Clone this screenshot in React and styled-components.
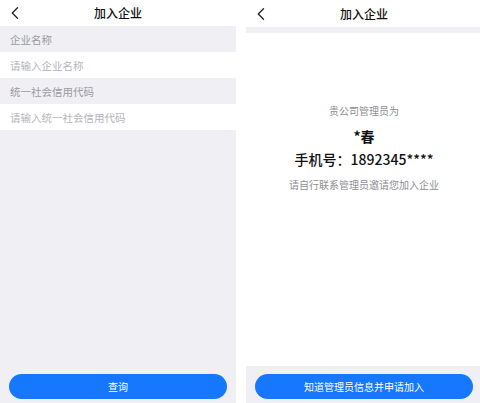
import styled, { createGlobalStyle } from "styled-components";

const GlobalStyle = createGlobalStyle`
  html, body {
    margin: 0;
    padding: 0;
    background: #ffffff;
  }
  body {
    font-family: "Noto Sans CJK SC", "Noto Sans", "Liberation Sans", sans-serif;
  }
`;

const Stage = styled.div`
  width: 480px;
  height: 403px;
  display: flex;
  gap: 10px;
  overflow: hidden;
  background: #ffffff;
`;

const Screen = styled.div`
  flex: 0 0 236px;
  height: 403px;
  display: flex;
  flex-direction: column;
  background: ${(p) => (p.$gray ? "#f0eff4" : "#ffffff")};
`;

const NavBar = styled.div`
  height: ${(p) => p.$h || 26}px;
  flex: 0 0 auto;
  display: grid;
  grid-template-columns: 40px 1fr 40px;
  align-items: center;
  background: #ffffff;
`;

const BackBtn = styled.div`
  display: flex;
  align-items: center;
  padding-left: 11px;
  height: 100%;
`;

const Title = styled.div`
  text-align: center;
  font-size: 12px;
  font-weight: 500;
  color: #111111;
  line-height: 14px;
`;

const SectionLabel = styled.div`
  height: 26px;
  display: flex;
  align-items: center;
  padding-left: 10px;
  font-size: 10.5px;
  color: #9a9aa0;
  background: #f0eff4;
`;

const InputRow = styled.div`
  height: 26px;
  display: flex;
  align-items: center;
  padding-left: 10px;
  font-size: 10.5px;
  color: #b4b4ba;
  background: #ffffff;
`;

const Spacer = styled.div`
  flex: 1;
`;

const Footer = styled.div`
  padding: ${(p) => (p.$band ? "6px 9px 4px" : "0 9px 4px")};
  background: #f0eff4;
`;

const PrimaryButton = styled.button`
  width: 100%;
  height: 25px;
  border: none;
  border-radius: 13px;
  background: #1677ff;
  color: #ffffff;
  font-family: inherit;
  font-size: 10px;
  padding: 0;
`;

const Divider = styled.div`
  height: 6px;
  background: #f0eff4;
`;

const Notice = styled.div`
  flex: 1;
  display: flex;
  flex-direction: column;
  align-items: center;
  padding-top: 71px;
  background: #ffffff;
`;

const Hint = styled.div`
  font-size: 10px;
  line-height: 14px;
  color: #8e8e93;
  margin-top: ${(p) => p.$top || 0}px;
`;

const Strong = styled.div`
  font-size: ${(p) => p.$size || 14}px;
  line-height: 18px;
  font-weight: ${(p) => p.$weight || 500};
  color: #111111;
  margin-top: ${(p) => p.$top || 0}px;
`;

const Chevron = () => (
  <svg width="8" height="12" viewBox="0 0 8 12">
    <polyline
      points="6.5,0.8 1.3,6 6.5,11.2"
      fill="none"
      stroke="#222"
      strokeWidth="1.3"
      strokeLinecap="round"
      strokeLinejoin="round"
    />
  </svg>
);

const Header = ({ h }) => (
  <NavBar $h={h}>
    <BackBtn>
      <Chevron />
    </BackBtn>
    <Title>加入企业</Title>
    <span />
  </NavBar>
);

export default function App() {
  return (
    <>
      <GlobalStyle />
      <Stage>
        <Screen $gray>
          <Header />
          <SectionLabel>企业名称</SectionLabel>
          <InputRow>请输入企业名称</InputRow>
          <SectionLabel>统一社会信用代码</SectionLabel>
          <InputRow>请输入统一社会信用代码</InputRow>
          <Spacer />
          <Footer>
            <PrimaryButton>查询</PrimaryButton>
          </Footer>
        </Screen>
        <Screen>
          <Header h={27} />
          <Divider />
          <Notice>
            <Hint>贵公司管理员为</Hint>
            <Strong $top={9} $size={14} $weight={700}>*春</Strong>
            <Strong $top={5}>手机号：1892345****</Strong>
            <Hint $top={10}>请自行联系管理员邀请您加入企业</Hint>
          </Notice>
          <Footer $band>
            <PrimaryButton>知道管理员信息并申请加入</PrimaryButton>
          </Footer>
        </Screen>
      </Stage>
    </>
  );
}
